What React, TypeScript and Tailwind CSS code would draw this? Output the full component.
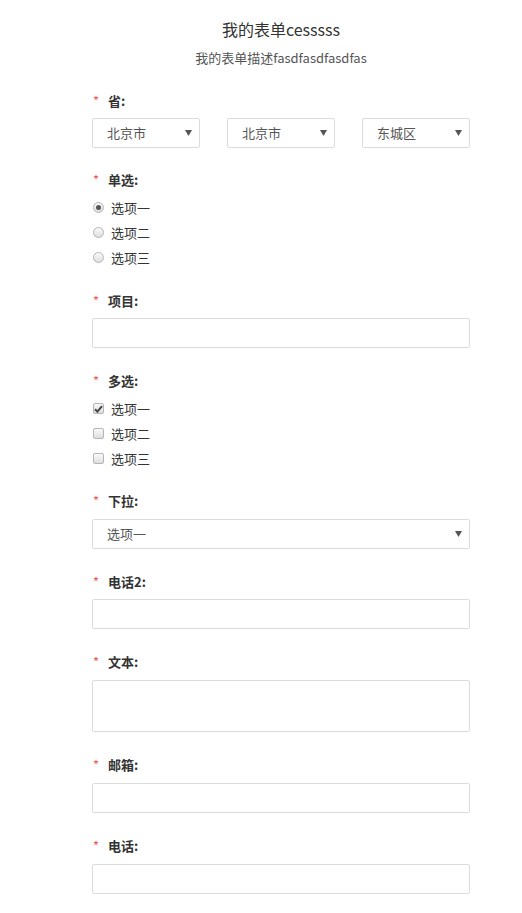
const font = { fontFamily: '"Noto Sans CJK SC", "Noto Sans", sans-serif' };

function Label({ text }: { text: string }) {
    return (
        <div className="flex items-center h-5 text-[13px] leading-5">
            <span className="w-4 pl-[1px] text-[#f25555] text-[13px]">*</span>
            <span className="font-bold text-[#333]">{text}</span>
        </div>
    );
}

function Arrow() {
    return (
        <svg width="7" height="6" viewBox="0 0 7 6" className="shrink-0">
            <path d="M0 0 H7 L3.5 6 Z" fill="#555" />
        </svg>
    );
}

function Select({ value }: { value: string }) {
    return (
        <div className="flex items-center justify-between h-[30px] pl-[14px] pr-[7px] border border-[#dcdcdc] rounded-[2px] bg-white text-[13px] text-[#555]">
            <span>{value}</span>
            <Arrow />
        </div>
    );
}

function Radio({ checked, text }: { checked?: boolean; text: string }) {
    return (
        <div className="flex items-center h-[25px] text-[13px] text-[#333]">
            <span className="ml-[1px] mr-[7px] w-[11px] h-[11px] rounded-full border border-[#b5b5b5] bg-gradient-to-b from-[#fafafa] to-[#dedede] flex items-center justify-center">
                {checked && <span className="w-[5px] h-[5px] rounded-full bg-[#555]" />}
            </span>
            {text}
        </div>
    );
}

function Check({ checked, text }: { checked?: boolean; text: string }) {
    return (
        <div className="flex items-center h-[25px] text-[13px] text-[#333]">
            <span className="ml-[1px] mr-[7px] w-[11px] h-[11px] rounded-[2px] border border-[#b5b5b5] bg-gradient-to-b from-[#fafafa] to-[#dedede] flex items-center justify-center">
                {checked && (
                    <svg width="9" height="8" viewBox="0 0 9 8">
                        <path d="M1 4.2 L3.4 6.6 L8 1.2" stroke="#444" strokeWidth="2" fill="none" />
                    </svg>
                )}
            </span>
            {text}
        </div>
    );
}

function Input({ h = 'h-[30px]' }: { h?: string }) {
    return <div className={`${h} border border-[#dcdcdc] rounded-[2px] bg-white`} />;
}

export default function App() {
    return (
        <div className="min-h-screen bg-white" style={font}>
            <div className="ml-[92px] w-[378px] pt-[18px] pb-4">
                <h1 className="text-center text-[16px] leading-[22px] text-[#333]">我的表单cesssss</h1>
                <p className="mt-2 text-center text-[13px] leading-5 text-[#555]">我的表单描述fasdfasdfasdfas</p>

                <div className="mt-[23px]">
                    <Label text="省:" />
                    <div className="mt-[7px] grid grid-cols-3 gap-[27px]">
                        <Select value="北京市" />
                        <Select value="北京市" />
                        <Select value="东城区" />
                    </div>
                </div>

                <div className="mt-[22px]">
                    <Label text="单选:" />
                    <div className="mt-[5px]">
                        <Radio checked text="选项一" />
                        <Radio text="选项二" />
                        <Radio text="选项三" />
                    </div>
                </div>

                <div className="mt-[21px]">
                    <Label text="项目:" />
                    <div className="mt-[7px]">
                        <Input />
                    </div>
                </div>

                <div className="mt-[23px]">
                    <Label text="多选:" />
                    <div className="mt-[5px]">
                        <Check checked text="选项一" />
                        <Check text="选项二" />
                        <Check text="选项三" />
                    </div>
                </div>

                <div className="mt-[20px]">
                    <Label text="下拉:" />
                    <div className="mt-[8px]">
                        <Select value="选项一" />
                    </div>
                </div>

                <div className="mt-[23px]">
                    <Label text="电话2:" />
                    <div className="mt-[7px]">
                        <Input />
                    </div>
                </div>

                <div className="mt-[23px]">
                    <Label text="文本:" />
                    <div className="mt-[8px]">
                        <Input h="h-[52px]" />
                    </div>
                </div>

                <div className="mt-[23px]">
                    <Label text="邮箱:" />
                    <div className="mt-[8px]">
                        <Input />
                    </div>
                </div>

                <div className="mt-[23px]">
                    <Label text="电话:" />
                    <div className="mt-[8px]">
                        <Input />
                    </div>
                </div>
            </div>
        </div>
    );
}
